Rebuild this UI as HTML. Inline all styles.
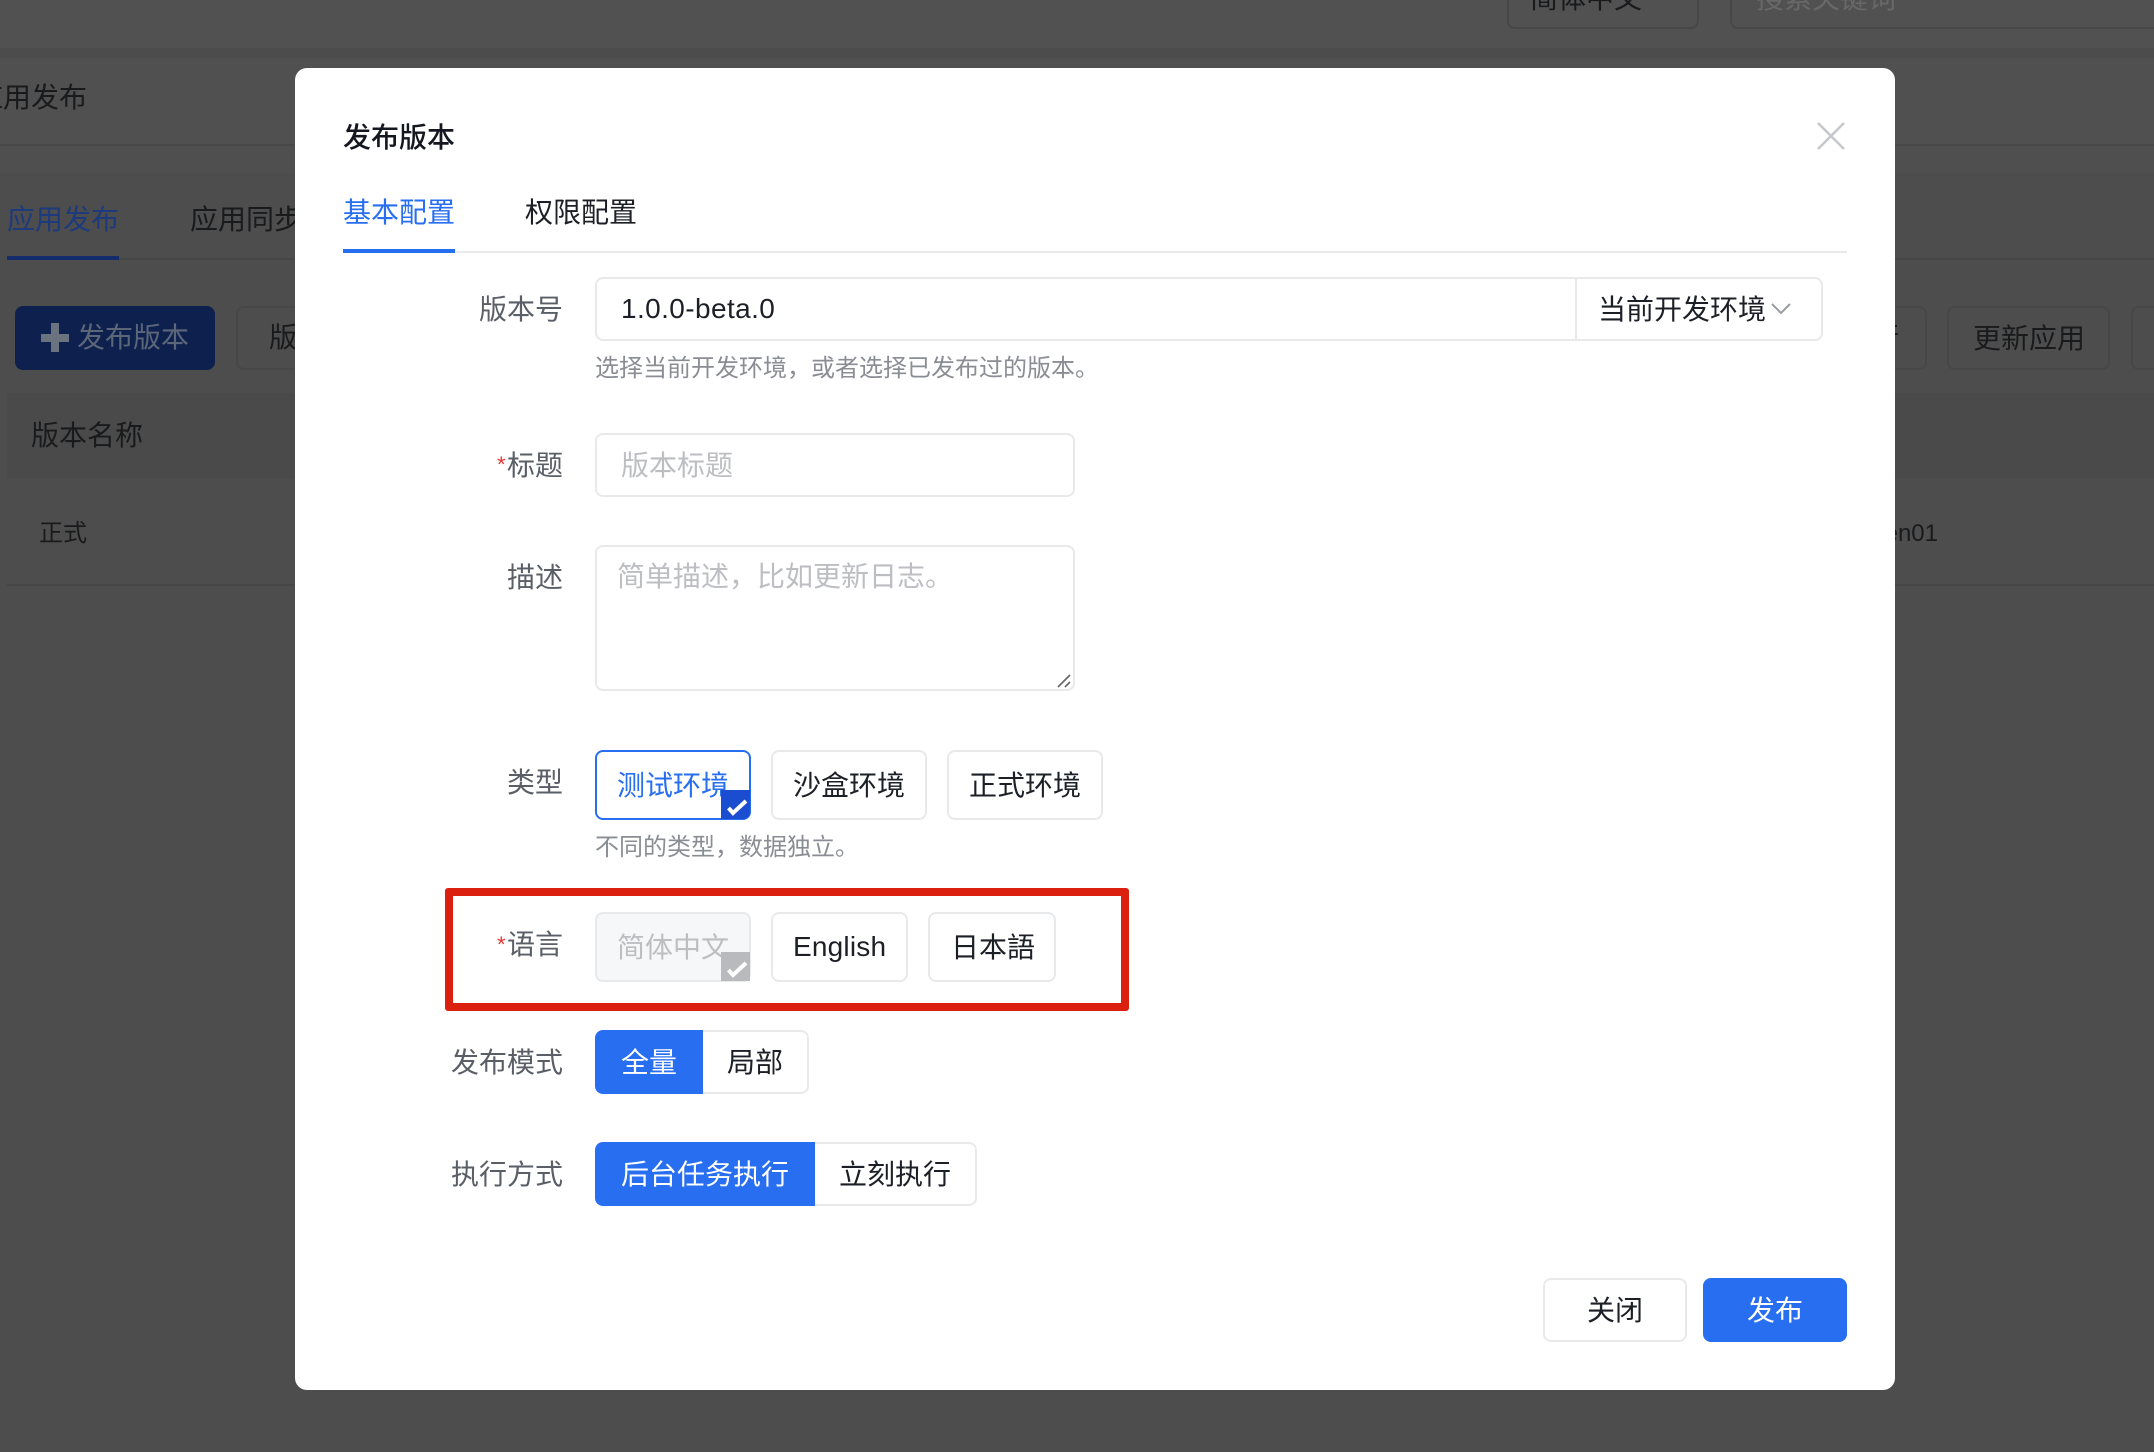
<!DOCTYPE html>
<html lang="zh"><head><meta charset="utf-8"><title>发布版本</title>
<style>
html,body{margin:0;padding:0}
body{width:2154px;height:1452px;overflow:hidden;position:relative;background:#4d4d4d;font-family:"Liberation Sans","Noto Sans CJK SC",sans-serif;color:#1c1f26}
.b{position:absolute;box-sizing:border-box}
.t{position:absolute;white-space:nowrap;font-size:28px;line-height:40px;height:40px;margin-top:1px}
.s{font-size:24px;line-height:34px;height:34px}
.m0{margin-top:0}
.d{color:#191a1c}
.l{color:#5a5e66;text-align:right;width:160px;left:403px;margin-top:1px}
.box{position:absolute;box-sizing:border-box;border:2px solid #e8e9eb;border-radius:8px;background:#fff}
.ob{position:absolute;box-sizing:border-box;border:2px solid #474747;border-radius:8px}
.r{color:#f33333;font-size:22px;left:497px;margin-top:2px}
svg{position:absolute;overflow:visible}
</style></head><body>
<div class="b" style="left:0;top:0;width:2154px;height:48px;background:#515151"></div>
<div class="b" style="left:0;top:48px;width:2154px;height:10px;background:#4c4c4c"></div>
<div class="b" style="left:0;top:58px;width:2154px;height:86px;background:#505050"></div>
<div class="b" style="left:0;top:144px;width:2154px;height:2px;background:#484848"></div>
<div class="b" style="left:0;top:146px;width:2154px;height:27px;background:#4e4f4e"></div>
<div class="b" style="left:7px;top:393px;width:2147px;height:85px;background:#4a4a4a"></div>
<div class="b" style="left:7px;top:584px;width:2147px;height:2px;background:#464646"></div>
<div class="b" style="left:7px;top:258px;width:2147px;height:2px;background:#464646"></div>
<div class="ob" style="left:1507px;top:-30px;width:192px;height:59px"></div>
<div class="ob" style="left:1730px;top:-30px;width:450px;height:59px"></div>
<div class="t d m0" style="left:1530px;top:-21px">简体中文</div>
<div class="t m0" style="left:1756px;top:-21px;color:#686868">搜索关键词</div>
<div class="t d m0" style="left:-25px;top:78px">应用发布</div>
<div class="t" style="left:7px;top:199px;color:#1d3a7c">应用发布</div>
<div class="b" style="left:7px;top:256px;width:112px;height:4px;background:#132c6c"></div>
<div class="t d" style="left:190px;top:199px">应用同步</div>
<div class="b" style="left:15px;top:306px;width:200px;height:64px;background:#0e204e;border-radius:8px"></div>
<div class="b" style="left:41px;top:334px;width:28px;height:8px;background:#6b7280"></div>
<div class="b" style="left:51px;top:323px;width:8px;height:29px;background:#6b7280"></div>
<div class="t" style="left:77px;top:317px;color:#5b6679">发布版本</div>
<div class="ob" style="left:236px;top:306px;width:200px;height:64px"></div>
<div class="t d" style="left:269px;top:317px">版本</div>
<div class="t d" style="left:31px;top:415px">版本名称</div>
<div class="t s d" style="left:39px;top:516px">正式</div>
<div class="t s d" style="right:216px;top:516px">Token01</div>
<div class="ob" style="left:1720px;top:306px;width:207px;height:64px"></div>
<div class="t d" style="left:1871px;top:317px">行</div>
<div class="ob" style="left:1947px;top:306px;width:163px;height:64px"></div>
<div class="t d" style="left:1973px;top:318px">更新应用</div>
<div class="ob" style="left:2131px;top:306px;width:100px;height:64px"></div>

<div class="b" style="left:295px;top:68px;width:1600px;height:1322px;background:#fff;border-radius:12px"></div>
<div class="t" style="left:343px;top:117px;font-weight:500;color:#14171f">发布版本</div>
<svg style="left:1817px;top:122px" width="28" height="28" viewBox="0 0 28 28"><path d="M1 1L27 27M27 1L1 27" stroke="#c8c9cd" stroke-width="2.6" fill="none"/></svg>
<div class="t" style="left:343px;top:192px;color:#276ef1">基本配置</div>
<div class="t" style="left:525px;top:192px">权限配置</div>
<div class="b" style="left:343px;top:251px;width:1504px;height:2px;background:#e8e9eb"></div>
<div class="b" style="left:343px;top:249px;width:112px;height:4px;background:#276ef1"></div>

<div class="t l" style="top:289px">版本号</div>
<div class="box" style="left:595px;top:277px;width:1228px;height:64px"></div>
<div class="b" style="left:1575px;top:278px;width:2px;height:62px;background:#e8e9eb"></div>
<div class="t m0" style="left:621px;top:289px;letter-spacing:.4px">1.0.0-beta.0</div>
<div class="t" style="left:1598px;top:289px">当前开发环境</div>
<svg style="left:1771px;top:303px" width="20" height="11" viewBox="0 0 20 11"><path d="M1 1L10 10L19 1" stroke="#9a9ca1" stroke-width="2" fill="none"/></svg>
<div class="t s" style="left:595px;top:351px;color:#8a8d93">选择当前开发环境，或者选择已发布过的版本。</div>

<div class="t l" style="top:445px"><span>标题</span></div>
<div class="t r" style="top:443px">*</div>
<div class="box" style="left:595px;top:433px;width:480px;height:64px"></div>
<div class="t" style="left:621px;top:445px;color:#bcbec2">版本标题</div>

<div class="t l" style="top:557px">描述</div>
<div class="box" style="left:595px;top:545px;width:480px;height:146px"></div>
<div class="t" style="left:617px;top:556px;color:#bcbec2">简单描述，比如更新日志。</div>
<svg style="left:1057px;top:673px" width="16" height="16" viewBox="0 0 16 16"><path d="M1 14L13 2M8 14L13 9" stroke="#666" stroke-width="1.6" fill="none"/></svg>

<div class="t l" style="top:762px">类型</div>
<div class="box" style="left:595px;top:750px;width:156px;height:70px;border-color:#276ef1"></div>
<div class="t" style="left:617px;top:765px;color:#276ef1">测试环境</div>
<div class="b" style="left:721px;top:790px;width:29px;height:29px;background:#1a4dcf;border-bottom-right-radius:7px"></div>
<svg style="left:721px;top:790px" width="29" height="29" viewBox="0 0 29 29"><path d="M7.500 18L12 23L25 11" stroke="#fff" stroke-width="4" fill="none"/></svg>
<div class="box" style="left:771px;top:750px;width:156px;height:70px"></div>
<div class="t" style="left:793px;top:765px">沙盒环境</div>
<div class="box" style="left:947px;top:750px;width:156px;height:70px"></div>
<div class="t" style="left:969px;top:765px">正式环境</div>
<div class="t s" style="left:595px;top:830px;color:#8a8d93">不同的类型，数据独立。</div>

<div class="b" style="left:445px;top:888px;width:684px;height:123px;border:8px solid #dc2010;border-radius:3px"></div>
<div class="t l" style="top:924px">语言</div>
<div class="t r" style="top:923px">*</div>
<div class="box" style="left:595px;top:912px;width:156px;height:70px;background:#f6f7f9"></div>
<div class="t" style="left:617px;top:927px;color:#bcbec2">简体中文</div>
<div class="b" style="left:721px;top:952px;width:29px;height:29px;background:#b9babe"></div>
<svg style="left:721px;top:952px" width="29" height="29" viewBox="0 0 29 29"><path d="M7.500 18L12 23L25 11" stroke="#fff" stroke-width="4" fill="none"/></svg>
<div class="box" style="left:771px;top:912px;width:137px;height:70px"></div>
<div class="t m0" style="left:793px;top:927px;letter-spacing:.2px">English</div>
<div class="box" style="left:928px;top:912px;width:128px;height:70px"></div>
<div class="t" style="left:951px;top:927px;font-family:'Liberation Sans','Noto Sans CJK JP',sans-serif">日本語</div>

<div class="t l" style="top:1042px">发布模式</div>
<div class="box" style="left:595px;top:1030px;width:214px;height:64px"></div>
<div class="b" style="left:595px;top:1030px;width:108px;height:64px;background:#276ef1;border-radius:8px 0 0 8px"></div>
<div class="t" style="left:621px;top:1042px;color:#fff">全量</div>
<div class="t" style="left:727px;top:1042px">局部</div>

<div class="t l" style="top:1154px">执行方式</div>
<div class="box" style="left:595px;top:1142px;width:382px;height:64px"></div>
<div class="b" style="left:595px;top:1142px;width:220px;height:64px;background:#276ef1;border-radius:8px 0 0 8px"></div>
<div class="t" style="left:621px;top:1154px;color:#fff">后台任务执行</div>
<div class="t" style="left:839px;top:1154px">立刻执行</div>

<div class="box" style="left:1543px;top:1278px;width:144px;height:64px"></div>
<div class="t m0" style="left:1587px;top:1291px">关闭</div>
<div class="b" style="left:1703px;top:1278px;width:144px;height:64px;background:#276ef1;border-radius:8px"></div>
<div class="t m0" style="left:1747px;top:1291px;color:#fff">发布</div>
</body></html>
